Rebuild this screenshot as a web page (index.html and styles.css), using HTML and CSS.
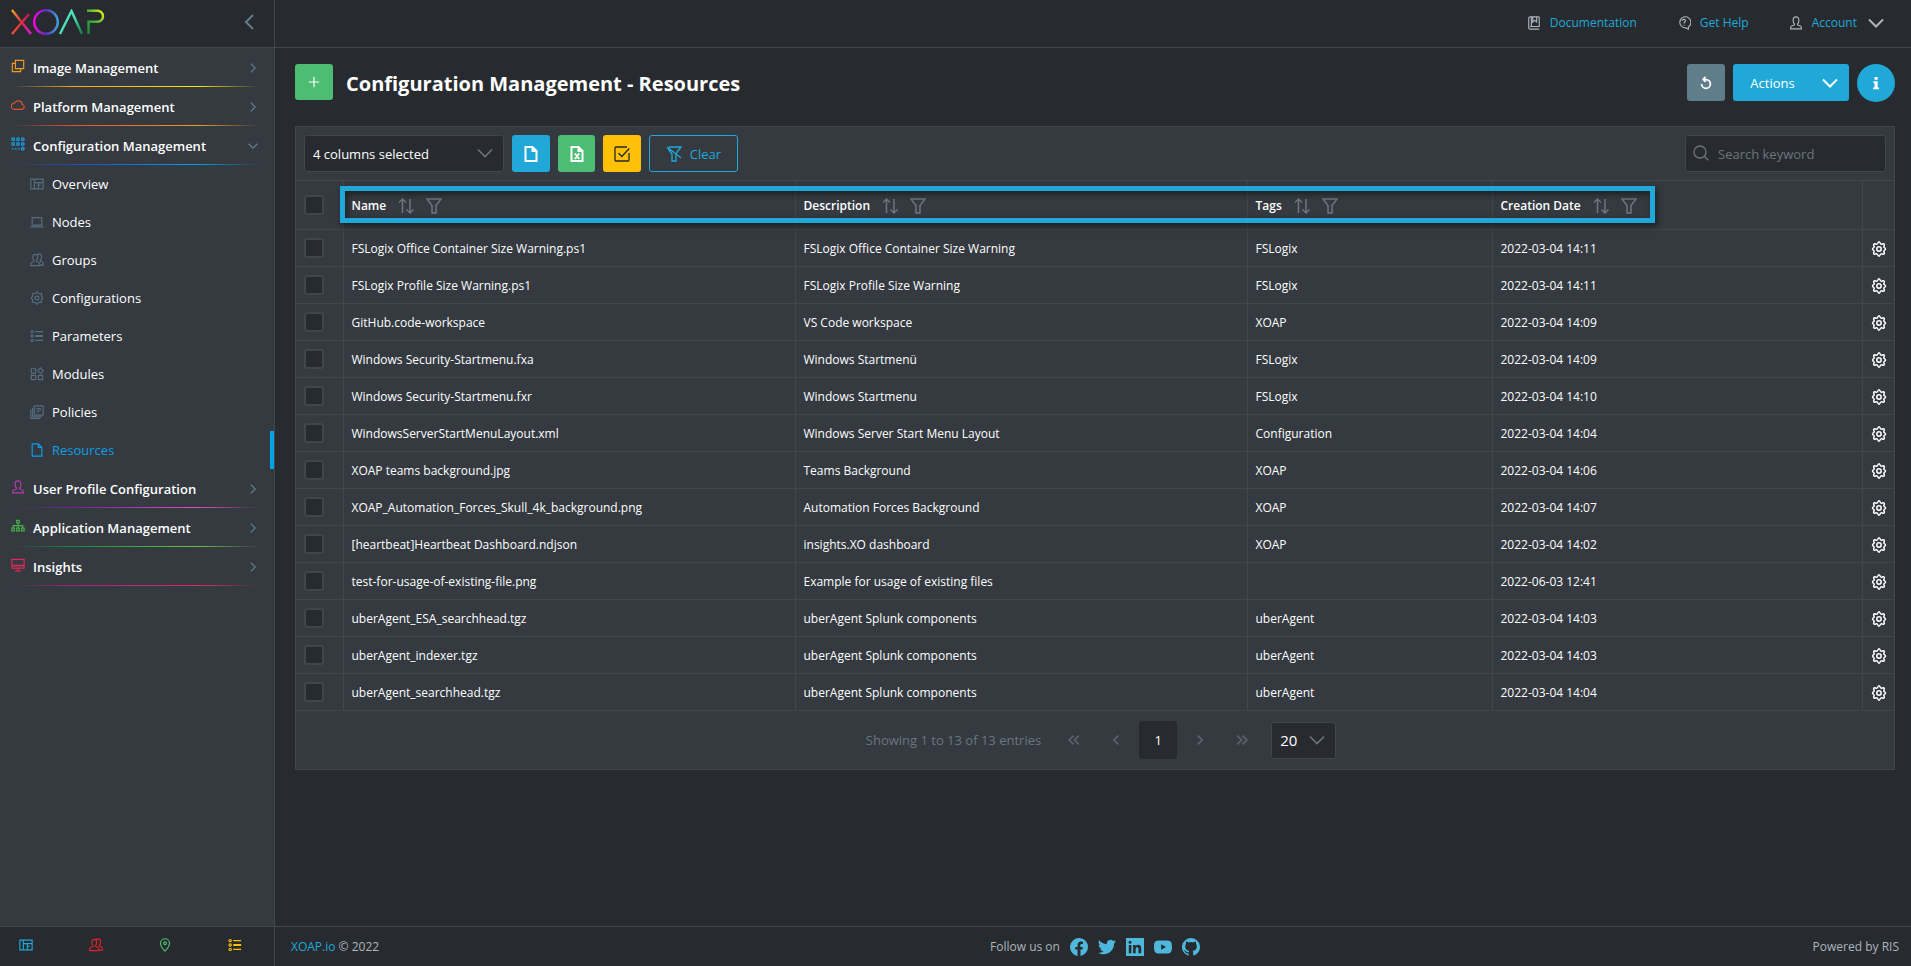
FILE: index.html
```html
<!DOCTYPE html>
<html lang="en">
<head>
<meta charset="UTF-8">
<meta name="viewport" content="width=device-width, initial-scale=1.0">
<title>XOAP - Resources</title>
<link rel="stylesheet" href="styles.css">
</head>
<body>
    <!-- Icons -->
    <svg class="sprite" aria-hidden="true">
        <linearGradient id="gradX1" x1="0" y1="0" x2="1" y2="1"><stop offset="0" stop-color="#f7a81b"/><stop offset=".5" stop-color="#d8274f"/><stop offset="1" stop-color="#e815d8"/></linearGradient>
        <linearGradient id="gradX2" x1="1" y1="0" x2="0" y2="1"><stop offset="0" stop-color="#c2185b"/><stop offset="1" stop-color="#f0502d"/></linearGradient>
        <linearGradient id="gradO" x1="0" y1="0" x2="1" y2="0"><stop offset="0" stop-color="#ff00e6"/><stop offset=".5" stop-color="#5a2fc0"/><stop offset="1" stop-color="#3fa0d8"/></linearGradient>
        <linearGradient id="gradA" x1="0" y1="0" x2="1" y2="1"><stop offset="0" stop-color="#55e0d8"/><stop offset=".5" stop-color="#4be0b0"/><stop offset="1" stop-color="#0f7a3c"/></linearGradient>
        <linearGradient id="gradP" x1="0" y1="1" x2="1" y2="0"><stop offset="0" stop-color="#128a40"/><stop offset=".5" stop-color="#3cae3c"/><stop offset="1" stop-color="#e6f018"/></linearGradient>

        <symbol id="clone" viewBox="0 0 16 16"><path d="M5 1.500h9.500v9.500H5zM5 5H1.500v9.500H11V11"/></symbol>
        <symbol id="cloud" viewBox="0 0 16 16"><path d="M4 13h8.500a2.800 2.800 0 0 0 .5-5.500A4.800 4.800 0 0 0 4 5.800 3.600 3.600 0 0 0 4 13z"/></symbol>
        <symbol id="grid" viewBox="0 0 16 16"><g stroke-width="1.500"><circle cx="2.500" cy="2.500" r="1.500"/><circle cx="8" cy="2.500" r="1.500"/><circle cx="13.500" cy="2.500" r="1.500"/><circle cx="2.500" cy="8" r="1.500"/><circle cx="8" cy="8" r="1.500"/><circle cx="13.500" cy="8" r="1.500"/><circle cx="13.500" cy="13.500" r="1.500"/><path d="M1 13.500h2M4.500 13.500h2M8 13.500h2"/></g></symbol>
        <symbol id="dash" viewBox="0 0 16 16"><path d="M1 2.500h14v11H1zM5 2.500v11M5 6.500h10M9.500 6.500v7M9.500 9.500H12"/></symbol>
        <symbol id="laptop" viewBox="0 0 16 16"><path d="M2.500 3h11v8.500h-11zM.5 13.500h15"/></symbol>
        <symbol id="person" viewBox="0 0 16 16"><path d="M8 1C5.800 1 4.700 2.600 4.700 5c0 1.800.6 3.200 1.500 4v1.200L3 11.500c-1 .4-1.200 1.200-1.200 3.200h12.400c0-2-.2-2.800-1.200-3.200l-3.200-1.300V9c.9-.8 1.500-2.200 1.500-4 0-2.400-1.100-4-3.300-4z"/></symbol>
        <symbol id="people" viewBox="0 0 16 16"><path d="M6 1.500C4 1.500 3.200 3 3.200 5c0 1.600.5 2.700 1.300 3.500v1.200l-2.700 1.200C.9 11.300.7 12.500.7 14.500h10.600c0-2-.2-3.200-1.100-3.600L7.500 9.700V8.500C8.300 7.700 8.800 6.600 8.800 5c0-2-.8-3.500-2.800-3.500zM8.200 2.200c.5-.8 1.200-1.200 2.300-1.200 2 0 2.700 1.500 2.700 3.500 0 1.600-.5 2.700-1.300 3.500v1.200l2.300 1c.9.4 1.100 1.600 1.100 3.600h-3.500"/></symbol>
        <symbol id="gear" viewBox="0 0 16 16"><path d="M8 .8c1 0 1.200 2 2 2.300.8.400 2.500-.9 3.200 0s-.5 2-.4 2.700c.1.800 1.700 1.200 1.700 2.200s-1.600 1.400-1.700 2.200c-.1.700 1.100 1.800.4 2.700s-2.400-.4-3.200 0c-.8.300-1 2.300-2 2.300s-1.200-2-2-2.300c-.8-.4-2.500.9-3.200 0s.5-2 .4-2.700C3.100 9.400 1.500 9 1.500 8s1.600-1.400 1.700-2.200c.1-.7-1.100-1.800-.4-2.700s2.400.4 3.200 0C6.800 2.800 7 .8 8 .8z"/><circle cx="8" cy="8" r="2.200"/></symbol>
        <symbol id="list" viewBox="0 0 16 16"><circle cx="2.500" cy="3" r="1.300"/><circle cx="2.500" cy="8" r="1.300"/><circle cx="2.500" cy="13" r="1.300"/><path d="M6 3h9M6 7.500h9M6 8.500h9M6 13h9"/></symbol>
        <symbol id="modules" viewBox="0 0 16 16"><path d="M1.500 2h5v5h-5zM1.500 9.500h5v5h-5zM9.500 9.500h5v5h-5zM12 1l3.200 3.300L12 7.500 8.800 4.300z"/></symbol>
        <symbol id="policies" viewBox="0 0 16 16"><path d="M5 1h10v10.500H5zM3 3v10.500h10.500M1 5v10.500h10.500M7.500 4h5M7.500 6h5M7.500 8h3"/></symbol>
        <symbol id="file" viewBox="0 0 16 16"><path d="M2.500 1h7l4 4v10h-11zM9.500 1v4h4"/></symbol>
        <symbol id="excel" viewBox="0 0 16 16"><path d="M2.500 1h7l4 4v10h-11zM9.500 1v4h4M5.800 7.500l4.400 5.500M10.200 7.500l-4.400 5.500"/></symbol>
        <symbol id="tree" viewBox="0 0 16 16"><path d="M6.500 1.500h3v3h-3zM1 10.500h3v3H1zM6.500 10.500h3v3h-3zM12 10.500h3v3h-3zM8 4.500v6M2.500 10.500v-3h11v3"/></symbol>
        <symbol id="monitor" viewBox="0 0 16 16"><path d="M1 1.500h14v10H1zM1 8.500h14M8 11.500v3M4.500 14.800h7"/><path d="M1 9h14" stroke-width="2" opacity=".6"/></symbol>
        <symbol id="pin" viewBox="0 0 16 16"><path d="M8 15S2.800 9.800 2.800 6a5.200 5.200 0 0 1 10.400 0C13.200 9.800 8 15 8 15z"/><circle cx="8" cy="6" r="1.600"/></symbol>
        <symbol id="book" viewBox="0 0 16 16"><path d="M14 1H3.500A1.500 1.500 0 0 0 2 2.500v11A1.500 1.500 0 0 0 3.500 15H14M14 1v11H3.500M6.500 1v6L8.700 5 11 7V1M5 1v11"/></symbol>
        <symbol id="help" viewBox="0 0 16 16"><path d="M13 12.500V15l-3-1.500a6.300 6.300 0 1 1 3-1z"/><path d="M5.800 5.500c0-2.200 4-2.200 4 0C9.800 7 8 6.800 8 8.500M8 10v1.200"/></symbol>
        <symbol id="down" viewBox="0 0 16 16"><path d="M1 4.500L8 11.500l7-7"/></symbol>
        <symbol id="left" viewBox="0 0 16 16"><path d="M12 1L5 8l7 7"/></symbol>
        <symbol id="right" viewBox="0 0 16 16"><path d="M5.500 3l5 5-5 5"/></symbol>
        <symbol id="prev" viewBox="0 0 16 16"><path d="M10.500 3l-5 5 5 5"/></symbol>
        <symbol id="first" viewBox="0 0 16 16"><path d="M7.500 3l-5 5 5 5M13.500 3l-5 5 5 5"/></symbol>
        <symbol id="last" viewBox="0 0 16 16"><path d="M2.500 3l5 5-5 5M8.500 3l5 5-5 5"/></symbol>
        <symbol id="plus" viewBox="0 0 16 16"><path d="M8 2v12M2 8h12"/></symbol>
        <symbol id="reload" viewBox="0 0 16 16"><path d="M3 9a5 5 0 1 0 5-5H5M7.500 1L4.800 3.800l2.700 2.800"/></symbol>
        <symbol id="info" viewBox="0 0 16 16"><path d="M6.300 1h3.600v3.200H6.300zM5 6h4.900v7H11.500v2H4.700v-2h1.600V8H5z" stroke="none" fill="currentColor"/></symbol>
        <symbol id="check" viewBox="0 0 16 16"><path d="M15 7v7a1 1 0 0 1-1 1H2a1 1 0 0 1-1-1V2a1 1 0 0 1 1-1h11M4.500 7l3.300 3.500 7.500-8"/></symbol>
        <symbol id="filter" viewBox="0 0 16 16"><path d="M1 1h14L10 7.500V15H6V7.500z"/></symbol>
        <symbol id="nofilter" viewBox="0 0 16 16"><path d="M3 1H15L10 7.500V15H6V8L1 1M1 1l14 11"/></symbol>
        <symbol id="sort" viewBox="0 0 16 16"><path d="M4.500 15V1M1 4.500L4.500 1 8 4.500M12 1v14M8.500 11.500l3.500 3.500 3.500-3.500"/></symbol>
        <symbol id="search" viewBox="0 0 16 16"><circle cx="7" cy="7" r="6"/><path d="M11.300 11.300l4 4"/></symbol>

        <symbol id="facebook" viewBox="0 0 16 16"><path d="M16 8a8 8 0 1 0-9.300 7.900v-5.600h-2V8h2V6.200c0-2 1.200-3.100 3-3.100.9 0 1.800.2 1.800.2v2h-1c-1 0-1.300.6-1.300 1.200V8h2.200l-.4 2.300H9.300v5.600A8 8 0 0 0 16 8z"/></symbol>
        <symbol id="twitter" viewBox="0 0 16 16"><path d="M5 14.500c6 0 9.300-5 9.300-9.300v-.4A6.700 6.700 0 0 0 16 3.100a6.500 6.500 0 0 1-1.900.5A3.300 3.300 0 0 0 15.600 1.800a6.600 6.600 0 0 1-2.100.8A3.300 3.300 0 0 0 7.900 5.600 9.300 9.300 0 0 1 1.100 2.100a3.300 3.300 0 0 0 1 4.400A3.200 3.200 0 0 1 .6 6.100a3.300 3.300 0 0 0 2.700 3.200 3.300 3.300 0 0 1-1.500.1 3.300 3.300 0 0 0 3.100 2.300A6.600 6.600 0 0 1 0 13a9.300 9.300 0 0 0 5 1.500z"/></symbol>
        <symbol id="linkedin" viewBox="0 0 16 16"><path fill-rule="evenodd" d="M0 0h16v16H0zM2.500 6.200v7.300h2.300V6.200zM3.600 2.400a1.300 1.300 0 1 0 0 2.700 1.300 1.300 0 0 0 0-2.700zM6.300 6.200v7.300h2.300V9.800c0-2.200 2.500-2.200 2.500 0v3.700h2.400V9c0-3.400-3.600-3.700-4.900-1.800v-1z"/></symbol>
        <symbol id="youtube" viewBox="0 0 16 16"><path fill-rule="evenodd" d="M2.500 2.500C4 2 12 2 13.500 2.500S16 4 16 8s-1 5-2.500 5.500-9.500.5-11 0S0 12 0 8s1-5 2.500-5.500zM6.400 5.600v4.800L10.600 8z"/></symbol>
        <symbol id="github" viewBox="0 0 16 16"><path d="M8 0a8 8 0 0 0-2.500 15.600c.4.100.5-.2.500-.4v-1.500c-2 .4-2.700-.5-2.900-1-.1-.3-.6-1-1-1.200-.3-.2-.8-.7 0-.7.700 0 1.200.7 1.400.9.800 1.300 2 1 2.500.8.100-.6.300-1 .6-1.200-1.800-.2-3.700-.9-3.700-4 0-.8.300-1.500.8-2.100-.1-.2-.4-1 .1-2.100 0 0 .7-.2 2.200.8a7.600 7.600 0 0 1 4 0c1.500-1 2.200-.8 2.200-.8.400 1.100.2 1.900.1 2.100.5.600.8 1.300.8 2.100 0 3.100-1.900 3.800-3.700 4 .3.300.5.700.5 1.500v2.400c0 .2.200.5.600.4A8 8 0 0 0 8 0z"/></symbol>
    </svg>

    <div class="layout">
        <aside class="sidebar">
            <div class="brand">
                <a href="#" class="logo" aria-label="XOAP">
                    <svg viewBox="0 0 94 26" width="94" height="26" fill="none" stroke-width="2.400">
                        <path d="M1 1l19 24" stroke="url(#gradX1)"/>
                        <path d="M18 5L1 25" stroke="url(#gradX2)"/>
                        <circle cx="35" cy="13" r="11.800" stroke="url(#gradO)"/>
                        <path d="M49 25L60.500 2 71 25" stroke="url(#gradA)"/>
                        <path d="M77.500 25V12.800h9a5.500 5.500 0 0 0 0-11H76" stroke="url(#gradP)"/>
                    </svg>
                </a>
                <button type="button" class="collapse" aria-label="Collapse menu"><svg class="icon icon-lg"><use href="#left"/></svg></button>
            </div>

            <nav class="menu">
                <a href="#" class="group image"><svg class="icon"><use href="#clone"/></svg><span>Image Management</span><svg class="icon arrow"><use href="#right"/></svg></a>
                <a href="#" class="group platform"><svg class="icon"><use href="#cloud"/></svg><span>Platform Management</span><svg class="icon arrow"><use href="#right"/></svg></a>
                <a href="#" class="group config"><svg class="icon"><use href="#grid"/></svg><span>Configuration Management</span><svg class="icon arrow open"><use href="#right"/></svg></a>
                <a href="#" class="item"><svg class="icon"><use href="#dash"/></svg>Overview</a>
                <a href="#" class="item"><svg class="icon"><use href="#laptop"/></svg>Nodes</a>
                <a href="#" class="item"><svg class="icon"><use href="#people"/></svg>Groups</a>
                <a href="#" class="item"><svg class="icon"><use href="#gear"/></svg>Configurations</a>
                <a href="#" class="item"><svg class="icon"><use href="#list"/></svg>Parameters</a>
                <a href="#" class="item"><svg class="icon"><use href="#modules"/></svg>Modules</a>
                <a href="#" class="item"><svg class="icon"><use href="#policies"/></svg>Policies</a>
                <a href="#" class="item active"><svg class="icon"><use href="#file"/></svg>Resources</a>
                <a href="#" class="group user"><svg class="icon"><use href="#person"/></svg><span>User Profile Configuration</span><svg class="icon arrow"><use href="#right"/></svg></a>
                <a href="#" class="group app"><svg class="icon"><use href="#tree"/></svg><span>Application Management</span><svg class="icon arrow"><use href="#right"/></svg></a>
                <a href="#" class="group insights"><svg class="icon"><use href="#monitor"/></svg><span>Insights</span><svg class="icon arrow"><use href="#right"/></svg></a>
            </nav>

            <div class="shortcuts">
                <a href="#" class="blue" aria-label="Overview"><svg class="icon"><use href="#dash"/></svg></a>
                <a href="#" class="red" aria-label="Groups"><svg class="icon"><use href="#people"/></svg></a>
                <a href="#" class="green" aria-label="Locations"><svg class="icon"><use href="#pin"/></svg></a>
                <a href="#" class="yellow" aria-label="Parameters"><svg class="icon"><use href="#list"/></svg></a>
            </div>
        </aside>

        <div class="page">
            <header class="topbar">
                <a href="#"><svg class="icon"><use href="#book"/></svg>Documentation</a>
                <a href="#"><svg class="icon"><use href="#help"/></svg>Get Help</a>
                <a href="#"><svg class="icon"><use href="#person"/></svg>Account<svg class="icon icon-lg caret"><use href="#down"/></svg></a>
            </header>

            <main>
                <div class="title-row">
                    <button type="button" class="btn btn-green btn-add" aria-label="Add"><svg class="icon"><use href="#plus"/></svg></button>
                    <h1>Configuration Management - Resources</h1>
                    <button type="button" class="btn btn-grey" aria-label="Reload"><svg class="icon"><use href="#reload"/></svg></button>
                    <button type="button" class="btn btn-actions">Actions<svg class="icon icon-lg"><use href="#down"/></svg></button>
                    <button type="button" class="btn btn-info" aria-label="Info"><svg class="icon"><use href="#info"/></svg></button>
                </div>

                <section class="card">
                    <div class="toolbar">
                        <div class="select columns">
                            <select aria-label="Columns"><option>4 columns selected</option></select>
                            <svg class="icon icon-lg"><use href="#down"/></svg>
                        </div>
                        <button type="button" class="btn btn-blue" aria-label="Export CSV"><svg class="icon icon-lg thick"><use href="#file"/></svg></button>
                        <button type="button" class="btn btn-green btn-excel" aria-label="Export Excel"><svg class="icon icon-lg thick"><use href="#excel"/></svg></button>
                        <button type="button" class="btn btn-yellow" aria-label="Export selection"><svg class="icon icon-lg"><use href="#check"/></svg></button>
                        <button type="button" class="btn btn-outline"><svg class="icon icon-lg"><use href="#nofilter"/></svg>Clear</button>
                        <div class="search">
                            <svg class="icon icon-lg"><use href="#search"/></svg>
                            <input type="text" placeholder="Search keyword" aria-label="Search keyword">
                        </div>
                    </div>

                    <div class="table-wrap">
                        <table>
                            <colgroup><col class="c-check"><col class="c-name"><col class="c-desc"><col class="c-tags"><col class="c-date"><col class="c-gear"></colgroup>
                            <thead>
                                <tr>
                                    <th><input type="checkbox" aria-label="Select all"></th>
                                    <th>Name<svg class="icon icon-lg"><use href="#sort"/></svg><svg class="icon icon-lg"><use href="#filter"/></svg></th>
                                    <th>Description<svg class="icon icon-lg"><use href="#sort"/></svg><svg class="icon icon-lg"><use href="#filter"/></svg></th>
                                    <th>Tags<svg class="icon icon-lg"><use href="#sort"/></svg><svg class="icon icon-lg"><use href="#filter"/></svg></th>
                                    <th>Creation Date<svg class="icon icon-lg"><use href="#sort"/></svg><svg class="icon icon-lg"><use href="#filter"/></svg></th>
                                    <th></th>
                                </tr>
                            </thead>
                            <tbody>
                                <tr><td><input type="checkbox" aria-label="Select row"></td><td>FSLogix Office Container Size Warning.ps1</td><td>FSLogix Office Container Size Warning</td><td>FSLogix</td><td>2022-03-04 14:11</td><td><button type="button" aria-label="Settings"><svg class="icon"><use href="#gear"/></svg></button></td></tr>
                                <tr><td><input type="checkbox" aria-label="Select row"></td><td>FSLogix Profile Size Warning.ps1</td><td>FSLogix Profile Size Warning</td><td>FSLogix</td><td>2022-03-04 14:11</td><td><button type="button" aria-label="Settings"><svg class="icon"><use href="#gear"/></svg></button></td></tr>
                                <tr><td><input type="checkbox" aria-label="Select row"></td><td>GitHub.code-workspace</td><td>VS Code workspace</td><td>XOAP</td><td>2022-03-04 14:09</td><td><button type="button" aria-label="Settings"><svg class="icon"><use href="#gear"/></svg></button></td></tr>
                                <tr><td><input type="checkbox" aria-label="Select row"></td><td>Windows Security-Startmenu.fxa</td><td>Windows Startmenü</td><td>FSLogix</td><td>2022-03-04 14:09</td><td><button type="button" aria-label="Settings"><svg class="icon"><use href="#gear"/></svg></button></td></tr>
                                <tr><td><input type="checkbox" aria-label="Select row"></td><td>Windows Security-Startmenu.fxr</td><td>Windows Startmenu</td><td>FSLogix</td><td>2022-03-04 14:10</td><td><button type="button" aria-label="Settings"><svg class="icon"><use href="#gear"/></svg></button></td></tr>
                                <tr><td><input type="checkbox" aria-label="Select row"></td><td>WindowsServerStartMenuLayout.xml</td><td>Windows Server Start Menu Layout</td><td>Configuration</td><td>2022-03-04 14:04</td><td><button type="button" aria-label="Settings"><svg class="icon"><use href="#gear"/></svg></button></td></tr>
                                <tr><td><input type="checkbox" aria-label="Select row"></td><td>XOAP teams background.jpg</td><td>Teams Background</td><td>XOAP</td><td>2022-03-04 14:06</td><td><button type="button" aria-label="Settings"><svg class="icon"><use href="#gear"/></svg></button></td></tr>
                                <tr><td><input type="checkbox" aria-label="Select row"></td><td>XOAP_Automation_Forces_Skull_4k_background.png</td><td>Automation Forces Background</td><td>XOAP</td><td>2022-03-04 14:07</td><td><button type="button" aria-label="Settings"><svg class="icon"><use href="#gear"/></svg></button></td></tr>
                                <tr><td><input type="checkbox" aria-label="Select row"></td><td>[heartbeat]Heartbeat Dashboard.ndjson</td><td>insights.XO dashboard</td><td>XOAP</td><td>2022-03-04 14:02</td><td><button type="button" aria-label="Settings"><svg class="icon"><use href="#gear"/></svg></button></td></tr>
                                <tr><td><input type="checkbox" aria-label="Select row"></td><td>test-for-usage-of-existing-file.png</td><td>Example for usage of existing files</td><td></td><td>2022-06-03 12:41</td><td><button type="button" aria-label="Settings"><svg class="icon"><use href="#gear"/></svg></button></td></tr>
                                <tr><td><input type="checkbox" aria-label="Select row"></td><td>uberAgent_ESA_searchhead.tgz</td><td>uberAgent Splunk components</td><td>uberAgent</td><td>2022-03-04 14:03</td><td><button type="button" aria-label="Settings"><svg class="icon"><use href="#gear"/></svg></button></td></tr>
                                <tr><td><input type="checkbox" aria-label="Select row"></td><td>uberAgent_indexer.tgz</td><td>uberAgent Splunk components</td><td>uberAgent</td><td>2022-03-04 14:03</td><td><button type="button" aria-label="Settings"><svg class="icon"><use href="#gear"/></svg></button></td></tr>
                                <tr><td><input type="checkbox" aria-label="Select row"></td><td>uberAgent_searchhead.tgz</td><td>uberAgent Splunk components</td><td>uberAgent</td><td>2022-03-04 14:04</td><td><button type="button" aria-label="Settings"><svg class="icon"><use href="#gear"/></svg></button></td></tr>
                            </tbody>
                        </table>
                        <div class="highlight"></div>
                    </div>

                    <div class="paginator">
                        <span>Showing 1 to 13 of 13 entries</span>
                        <button type="button" aria-label="First page"><svg class="icon"><use href="#first"/></svg></button>
                        <button type="button" aria-label="Previous page"><svg class="icon"><use href="#prev"/></svg></button>
                        <button type="button" class="current">1</button>
                        <button type="button" aria-label="Next page"><svg class="icon"><use href="#right"/></svg></button>
                        <button type="button" aria-label="Last page"><svg class="icon"><use href="#last"/></svg></button>
                        <div class="select rows">
                            <select aria-label="Rows per page"><option>20</option></select>
                            <svg class="icon icon-lg"><use href="#down"/></svg>
                        </div>
                    </div>
                </section>
            </main>

            <footer class="footer">
                <div><a href="#">XOAP.io</a> © 2022</div>
                <div class="social">
                    <span>Follow us on</span>
                    <a href="#" aria-label="Facebook"><svg><use href="#facebook"/></svg></a>
                    <a href="#" aria-label="Twitter"><svg><use href="#twitter"/></svg></a>
                    <a href="#" aria-label="LinkedIn"><svg><use href="#linkedin"/></svg></a>
                    <a href="#" aria-label="YouTube"><svg><use href="#youtube"/></svg></a>
                    <a href="#" aria-label="GitHub"><svg><use href="#github"/></svg></a>
                </div>
                <div class="powered">Powered by RIS</div>
            </footer>
        </div>
    </div>
</body>
</html>
```
FILE: styles.css
```css
* {
    box-sizing: border-box;
}
body {
    margin: 0;
    background-color: #272b2f;
    color: #fff;
    font-family: "Open Sans", "Noto Sans", sans-serif;
    font-size: 13px;
    line-height: 20px;
}
a {
    color: #20a8d8;
    text-decoration: none;
}
button, input, select {
    font: inherit;
    color: inherit;
}
button {
    padding: 0;
    border: none;
    background: none;
    cursor: pointer;
}
.sprite {
    position: absolute;
    width: 0;
    height: 0;
}
.icon {
    width: 14px;
    height: 14px;
    flex: none;
    fill: none;
    stroke: currentColor;
    stroke-width: 1.3;
}
.icon-lg {
    width: 16px;
    height: 16px;
}
.thick {
    stroke-width: 2;
}
.layout {
    display: flex;
    min-height: 100vh;
}

/* Sidebar */
.sidebar {
    display: flex;
    flex-direction: column;
    width: 275px;
    flex: none;
    background-color: #343a40;
    border-right: 1px solid #3f464c;
}
.brand {
    display: flex;
    align-items: center;
    justify-content: space-between;
    height: 48px;
    padding: 0 17px 4px 11px;
    background-color: #272b2f;
    border-bottom: 1px solid #3f464c;
}
.logo, .collapse {
    display: flex;
}
.collapse {
    color: #5f7d8c;
}
.collapse .icon {
    stroke-width: 2;
}
.menu {
    flex: 1;
}
.group {
    display: flex;
    align-items: center;
    height: 39px;
    padding: 0 14px 0 11px;
    color: #fff;
    font-weight: 600;
    background: no-repeat 11px bottom / 248px 1px;
}
.group span {
    flex: 1;
    padding-left: 8px;
}
.group .icon:first-child {
    margin-bottom: 4px;
}
.image .icon { color: #f39c1f; }
.image { background-image: linear-gradient(90deg, transparent, #f7a81b 25%, #ffe600 75%, transparent); }
.platform .icon { color: #e8502d; }
.platform { background-image: linear-gradient(90deg, transparent, #e8502d 25%, #f39c1f 75%, transparent); }
.config .icon { color: #1a9be0; }
.config { background-image: linear-gradient(90deg, transparent, #1f4fb8 25%, #00a2e8 75%, transparent); }
.user .icon { color: #b83bb0; }
.user { background-image: linear-gradient(90deg, transparent, #7a1f9c 25%, #e04fc0 75%, transparent); }
.app .icon { color: #46b04a; }
.app { background-image: linear-gradient(90deg, transparent, #128a40 25%, #6cc24a 75%, transparent); }
.insights .icon { color: #e0285a; }
.insights { background-image: linear-gradient(90deg, transparent, #a81f80 25%, #e0286e 75%, transparent); }
.group .arrow {
    color: #5f7d8c;
    stroke-width: 1.5;
}
.group .open {
    transform: rotate(90deg);
}
.item {
    display: flex;
    align-items: center;
    gap: 8px;
    height: 38px;
    padding-left: 30px;
    color: #fff;
}
.item .icon {
    color: #566d80;
}
.active, .active .icon {
    color: #0d9ee6;
}
.active {
    border-right: 4px solid #00a2e8;
}
.shortcuts {
    display: flex;
    justify-content: space-between;
    height: 40px;
    padding: 10px 32px 0 19px;
    background-color: #272b2f;
    border-top: 1px solid #3f464c;
}
.blue { color: #20a8d8; }
.red { color: #e0202c; }
.green { color: #4dbd74; }
.yellow { color: #ffc107; }

/* Main area */
.page {
    display: flex;
    flex-direction: column;
    flex: 1;
    min-width: 0;
}
.topbar {
    display: flex;
    align-items: center;
    justify-content: flex-end;
    gap: 40px;
    height: 48px;
    padding: 0 27px 2px;
    border-bottom: 1px solid #3f464c;
    font-size: 12px;
}
.topbar a {
    display: flex;
    align-items: center;
    gap: 9px;
}
.topbar .icon {
    color: #adb5bd;
}
.topbar .caret {
    stroke-width: 2;
    margin-left: 2px;
}
main {
    flex: 1;
    padding: 16px 16px 0 20px;
}
.title-row {
    display: flex;
    gap: 8px;
    height: 38px;
    margin-bottom: 24px;
}
h1 {
    flex: 1;
    margin: 8px 0 0 5px;
    font-size: 20px;
    line-height: 24px;
    font-weight: 700;
}
.btn {
    display: flex;
    align-items: center;
    justify-content: center;
    width: 38px;
    height: 37px;
    border-radius: 3px;
}
.btn-add { height: 36px; }
.btn-green { background-color: #4dbd74; color: #fff; }
.btn-excel { width: 37px; }
.btn-blue { background-color: #20a8d8; color: #fff; }
.btn-yellow { background-color: #ffc107; color: #23282c; }
.btn-grey { background-color: #607d8b; color: #fff; }
.btn-grey .icon {
    stroke-width: 2;
}
.btn-actions {
    width: 116px;
    gap: 27px;
    padding-left: 6px;
    background-color: #20a8d8;
}
.btn-actions .icon {
    stroke-width: 2;
}
.btn-info {
    height: 38px;
    border-radius: 50%;
    background-color: #20a8d8;
}
.btn-outline {
    width: 89px;
    gap: 8px;
    border: 1px solid #20a8d8;
    color: #20a8d8;
}
.card {
    background-color: #343a40;
    border: 1px solid #3f464c;
}
.toolbar {
    display: flex;
    gap: 8px;
    padding: 8px;
}
.select {
    position: relative;
}
.select select {
    width: 100%;
    height: 37px;
    padding: 0 8px;
    appearance: none;
    background-color: #272b2f;
    border: 1px solid #3f464c;
    border-radius: 3px;
}
.select .icon {
    position: absolute;
    right: 11px;
    top: 10px;
    color: #6c757d;
    stroke-width: 1.6;
    pointer-events: none;
}
.columns {
    width: 200px;
}
.search {
    position: relative;
    width: 201px;
    margin-left: auto;
}
.search input {
    width: 100%;
    height: 37px;
    padding: 0 8px 0 32px;
    background-color: #272b2f;
    border: 1px solid #3f464c;
    border-radius: 3px;
}
.search input::placeholder {
    color: #6c757d;
}
.search .icon {
    position: absolute;
    left: 8px;
    top: 10px;
    color: #6c757d;
}

/* Table */
.table-wrap {
    position: relative;
}
table {
    width: 100%;
    table-layout: fixed;
    border-collapse: collapse;
    font-size: 12px;
}
.c-check { width: 47px; }
.c-name, .c-desc { width: 452px; }
.c-tags { width: 245px; }
.c-date { width: 370px; }
.c-gear { width: 32px; }
th, td {
    height: 37px;
    padding: 1px 8px 0;
    text-align: left;
    border-top: 1px solid #3f464c;
    border-left: 1px solid #3f464c;
}
th:first-child, td:first-child {
    padding-top: 0;
    border-left: none;
}
tbody tr:last-child td {
    border-bottom: 1px solid #3f464c;
}
th {
    height: 49px;
    font-weight: 600;
}
th .icon {
    margin-left: 12px;
    color: #6c757d;
    stroke-width: 1.5;
    vertical-align: middle;
}
input[type="checkbox"] {
    display: block;
    width: 20px;
    height: 20px;
    margin: 0;
    appearance: none;
    background-color: #272b2f;
    border: 2px solid #3f464c;
    border-radius: 3px;
}
td button {
    display: flex;
}
td .icon {
    width: 16px;
    height: 16px;
    stroke-width: 1.5;
}
.highlight {
    position: absolute;
    left: 44px;
    top: 6px;
    width: 1315px;
    height: 37px;
    border: 5px solid #20a8d8;
    box-shadow: 2px 3px 6px #1c1f22, inset 2px 3px 6px #1c1f22;
    pointer-events: none;
}

/* Paginator */
.paginator {
    display: flex;
    align-items: center;
    justify-content: center;
    gap: 4px;
    height: 58px;
    padding-left: 12px;
    color: #6c757d;
}
.paginator span {
    padding-right: 10px;
}
.paginator button {
    display: flex;
    align-items: center;
    justify-content: center;
    width: 38px;
    height: 38px;
    border-radius: 3px;
    color: #5a636b;
}
.paginator button .icon {
    stroke-width: 2;
}
.paginator .current {
    background-color: #272b2f;
    color: #fff;
}
.rows {
    width: 65px;
    margin-left: 6px;
    color: #fff;
    font-size: 15px;
}

/* Footer */
.footer {
    display: flex;
    align-items: center;
    height: 40px;
    padding: 0 12px 0 16px;
    border-top: 1px solid #3f464c;
    color: #adb5bd;
    font-size: 12px;
}
.footer > div {
    flex: 1;
}
.footer .social {
    display: flex;
    align-items: center;
    justify-content: center;
    gap: 10px;
}
.social a {
    display: flex;
}
.social svg {
    width: 18px;
    height: 18px;
    fill: #4db8dc;
}
.powered {
    text-align: right;
}
```
